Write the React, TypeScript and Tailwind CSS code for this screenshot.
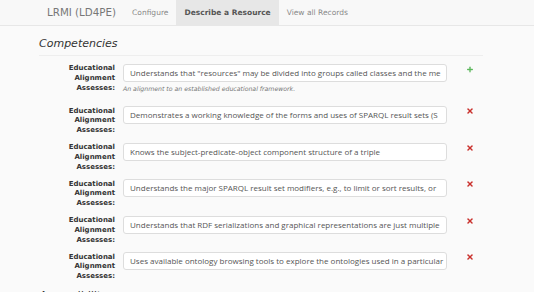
import { Plus, X } from 'lucide-react'

// Values as far as the input fields show them
const rows = [
  'Understands that "resources" may be divided into groups called classes and the me',
  'Demonstrates a working knowledge of the forms and uses of SPARQL result sets (S',
  'Knows the subject-predicate-object component structure of a triple',
  'Understands the major SPARQL result set modifiers, e.g., to limit or sort results, or',
  'Understands that RDF serializations and graphical representations are just multiple',
  'Uses available ontology browsing tools to explore the ontologies used in a particular'
]

const nav = ['Configure', 'Describe a Resource', 'View all Records']

export default function App() {
  return (
    <div className="w-[534px] h-[292px] overflow-hidden bg-[#fafafa] font-['DejaVu_Sans',sans-serif]">
      {/* Navbar */}
      <div className="flex h-[26px] items-stretch border-b border-[#e7e7e7] bg-[#f8f8f8] pl-[47px]">
        <div className="flex items-center pr-[8px] text-[10.3px] text-[#777]">LRMI (LD4PE)</div>
        {nav.map((item) => (
          <div
            key={item}
            className={
              item === 'Describe a Resource'
                ? 'flex items-center bg-[#e7e7e7] px-[8px] text-[7.5px] font-bold text-[#555]'
                : 'flex items-center px-[8px] text-[7.5px] text-[#888]'
            }
          >
            {item}
          </div>
        ))}
      </div>

      <div className="pl-[39px] pr-[51px]">
        {/* Section heading */}
        <div className="mt-[10px] border-b border-[#eee] pb-[2px] text-[11px] italic text-[#333]">Competencies</div>

        {/* Alignment rows */}
        <div className="mt-[8px] flex flex-col gap-[6.6px]">
          {rows.map((text, i) => (
            <div key={i} className="flex items-start">
              <div className="w-[76px] pt-[0.5px] text-right text-[7px] font-bold leading-[9.8px] text-[#333]">
                Educational
                <br />
                Alignment
                <br />
                Assesses:
              </div>
              <div className="ml-[8px] w-[324px]">
                <div className="flex h-[18px] items-center overflow-hidden whitespace-nowrap rounded-[3px] border border-[#ddd] bg-white pl-[6px] font-['Open_Sans',sans-serif] text-[8px] text-[#555]">
                  {text}
                </div>
                {i === 0 && (
                  <div className="mt-[2px] mb-[6px] text-[6.2px] italic leading-[10px] text-[#777]">
                    An alignment to an established educational framework.
                  </div>
                )}
              </div>
              <div className="ml-[19px] mt-[1px] flex w-[8px] justify-center">
                {i === 0 ? (
                  <Plus size={9} strokeWidth={4} className="text-[#5cb85c]" />
                ) : (
                  <X size={8} strokeWidth={4.5} className="text-[#c9302c]" />
                )}
              </div>
            </div>
          ))}
        </div>

        <div className="mt-[6px] text-[11px] italic text-[#333]">Accessibility</div>
      </div>
    </div>
  )
}
